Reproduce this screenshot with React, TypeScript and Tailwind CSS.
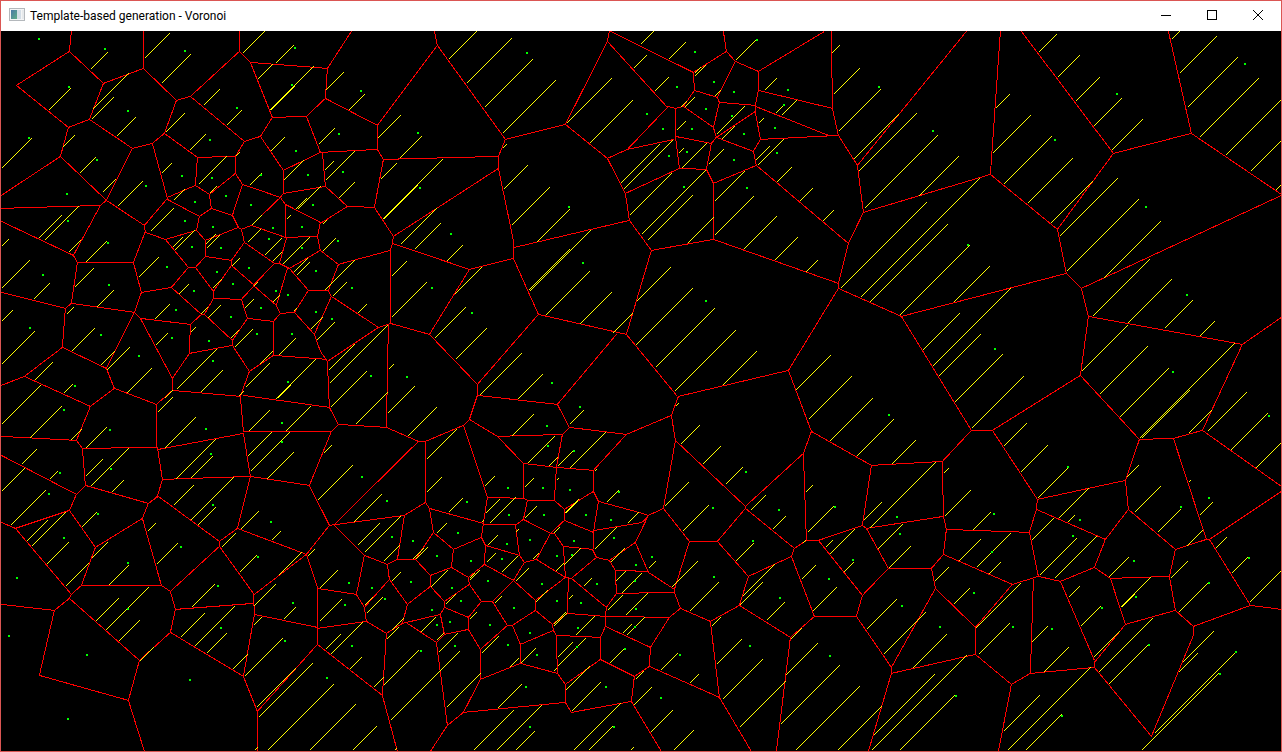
import React from "react";

// Polylines of cell boundaries, "x,y x,y ..." separated by semicolons.
const EDGES = `
71,31 69,51 103,83 89,119 68,127 16,85 69,51;68,127 60,156 1,195;143,31 143,68 103,83;
143,68 176,100 190,96 239,51 239,31;239,51 250,62 327,68;250,62 272,117 306,116 325,98;
176,100 164,133 152,143 132,148 89,119;132,148 106,200 60,156;1,208 100,205 106,200 144,225;
100,205 73,255;1,221 73,255;152,143 167,198 144,225 145,232;164,133 197,157 235,156 244,141 260,136 272,117;
190,96 244,141;197,157 195,185 167,197;195,185 209,194 235,173 235,156;
235,173 242,184 280,197 283,193 283,170 260,136;242,184 232,215 211,208 209,194;167,199 199,216 211,208;
199,216 196,230 165,239 145,232;232,215 238,227 241,229 251,225 280,197;196,230 205,240 238,227;
283,193 325,186;283,170 320,152 306,116;280,197 285,204 285,237 251,225;285,237 317,236;285,204 320,222 317,236;
351,31 327,68 325,98 377,125 437,45 434,31;437,45 505,139 565,124 607,41 609,31;
377,125 377,149 383,159 498,156 505,139;498,156 498,168 393,236 374,207 383,159;498,168 513,240;
320,152 377,149;322,152 325,186 347,206 374,207;347,206 320,223;393,236 392,243;
565,124 607,158 625,193 629,220 651,250;629,220 514,247;607,158 627,149 667,107;627,149 674,139;
607,41 667,107;610,31 693,72 694,90 683,106 675,108 667,106;
723,31 726,51 693,72;726,51 735,61 758,71 824,31;735,61 717,97 694,90;
717,97 719,102 755,105 758,90 758,71;758,90 832,108 831,31;832,108 838,135 857,165 966,31;
857,165 863,212 990,174 1000,31;863,212 848,243;755,106 828,135 838,135 760,139 755,112 755,105;
755,111 716,137 753,151 760,139;719,102 713,127 716,137 711,143 706,169 713,183 756,165 753,151;
683,106 713,127;675,108 675,136 711,143;675,136 679,168 706,169;679,168 625,193;713,183 713,239;
756,165 848,243;1021,31 1113,153 1191,133 1168,31;1191,133 1281,194;1281,195 1081,288;
990,174 1057,229 1113,153;1057,229 1066,273;
73,255 77,262 133,262 145,231;77,262 71,303 65,308 1,292;65,308 62,347 24,376 1,385;
62,347 106,368 134,312 71,303;133,262 141,292 134,312;141,292 171,287 188,267 165,239;
134,312 140,318 190,324 201,314 171,287;140,318 172,378 189,353 190,324;
172,378 172,390 156,404 114,388 106,368;114,388 90,406 24,376;90,406 76,440 1,436;
76,440 82,448 156,447 156,404;172,390 240,396 249,371 232,345 189,353;
188,267 195,267 205,256 205,240;205,256 231,260 244,242 241,229;
195,267 213,291 213,298 241,299 254,285 231,265 213,291;231,260 231,265;213,298 204,314 201,314;
204,314 232,340 247,318 241,299;232,340 232,345;247,318 273,321 280,313 276,305 253,285 274,263 244,242;
273,321 273,355 249,371;273,355 327,359;280,313 294,312 308,290 289,268 287,268 276,305;
274,263 279,263 289,268;279,263 286,238;289,268 320,250 317,236;308,290 328,290;294,312 314,334;
320,351 327,361;314,334 320,351;240,396 243,431 331,431;243,395 329,407;
243,433 158,449;157,447 162,479 250,476 243,433;250,476 309,485 331,431;162,479 157,496 148,503;
250,476 237,528;309,485 329,525;82,448 85,485 76,494 1,455;85,485 148,503;76,494 69,510;
392,243 390,250 338,264 320,250;338,264 328,290 331,296 314,334;331,296 378,327 390,323 390,250;
378,327 327,361 329,407 338,424 386,427 388,324;390,323 429,334 469,269 392,243;
469,269 513,258 513,240;513,258 538,314 626,334 651,250;538,314 477,384 429,334;
477,384 477,395 469,419 463,425 425,441 418,441 386,427;477,395 557,404 616,334;
557,404 569,427 626,434 671,415;469,419 497,436 562,434 569,427;497,436 523,463 556,467 562,434;
556,467 593,470 626,434;556,467 554,500;523,463 523,498;593,470 593,491 564,509;593,491 598,501;
425,441 425,502;418,441 334,524;463,425 487,497;338,424 331,431;626,334 677,396;
651,250 713,239 838,283 838,288 788,370 678,396 671,415 675,440 663,508;848,243 838,283;675,440 745,506;
838,288 901,316 1066,273;901,316 971,430;788,370 811,431 803,453 745,506;
811,431 871,465 942,461 971,430;803,453 806,540;871,465 862,525;942,461 943,516;
1066,273 1081,288 1088,316 1242,344 1281,317;1088,316 1080,375 992,430 971,430;
1080,375 1139,439 1173,438 1202,430 1242,344;1202,430 1281,486;1139,439 1125,480 1128,509;
992,430 1037,499;1125,480 1037,499;1173,438 1206,539;
1,522 15,528 69,510 95,547 142,518 148,503 158,496;15,528 71,594 69,598 54,610 1,604;
142,518 161,585 170,591 219,546 219,541 158,496;95,547 81,585 71,594;81,585 161,585;
69,598 139,660 128,700 39,675 54,610;128,700 144,751;170,591 175,609 170,632 139,660;
170,632 243,676 254,614 253,593 219,546;175,609 253,603;254,614 317,627;
219,541 237,528 306,554 254,594;306,554 329,525;306,554 317,587 317,644 257,711 257,751;243,676 257,711;
329,525 404,515 425,502;334,525 364,555 356,594 317,588;364,555 387,564 397,559 404,515;
397,559 415,559 433,532 429,508;425,502 429,508 483,523 487,497;433,532 453,549 481,537 483,523;
453,549 451,567 430,575 415,559;387,564 389,579 364,607 356,594;
389,579 407,604 402,623 386,633 366,621 364,607;366,621 317,628;407,604 430,586 430,575;
430,586 444,601 469,584 468,577 451,567;468,577 484,564 485,545 481,537;
485,545 519,555 515,524 483,524;515,525 523,519 527,500 554,500 564,509 564,520 550,533 523,519;
487,497 524,498 527,500;564,520 593,532 598,501 642,513;594,530 642,522;593,531 593,549;
550,533 536,559 524,562 519,555;550,533 554,533 563,546 592,549;563,546 565,577 536,559;
524,562 513,580 484,564;469,584 481,601 492,601 513,580;492,601 507,625 512,625 535,610 535,600 513,580;
535,600 565,577 571,578 596,557 592,549;596,557 609,560 635,542 648,515;
609,560 615,570 616,593 606,607 571,578;568,578 567,613 552,624 535,610;567,613 605,616 606,607;
615,570 648,571;616,593 674,592;604,616 669,617;605,616 605,626 650,647;
552,624 553,630 520,644 512,625;553,630 556,635 600,637 605,626;556,635 557,673 520,663 520,644;
520,663 480,679 480,649 507,625;481,601 468,617 444,607 444,601;468,617 468,629 480,649;
468,629 444,634 440,614 444,607;440,614 402,623;407,623 436,642 444,634;386,633 382,695 317,644;
382,695 397,751;436,642 447,725 463,712 480,679;447,725 430,751;463,712 565,702 565,684 557,673;
565,684 600,659 600,637;600,659 634,676 649,666;634,676 631,701 571,712 565,702;631,701 661,751;
642,513 648,515 663,508 689,541 717,541 745,508 745,506;689,541 674,589;635,542 648,572 674,589;642,522 648,515;
674,589 674,592 680,608 710,621 739,605 748,576 717,541;680,608 669,617 650,647 649,666 719,697 710,621;
719,697 751,751;739,605 790,637 776,751;790,637 814,616 791,556 748,576;791,556 794,548 745,508;
794,548 806,540 818,540 862,525;818,540 862,595 856,616 814,616;
862,525 866,528 943,516 946,529 943,554 931,568 888,568 866,528;888,568 862,595;
856,616 891,667 935,588 931,568;891,667 891,673 868,751;891,673 975,654 975,627 935,588;
946,529 1029,532;943,554 1012,584;
1037,499 1036,509 1029,532 1038,576 1012,584 975,627;1036,509 1105,539 1128,509;
1105,539 1094,567 1060,581 1038,576;1094,567 1110,578 1169,576 1175,549 1128,509;
1175,549 1206,539 1209,539 1281,491;1209,539 1250,605 1281,609;1169,576 1175,610 1193,626 1250,605;
1110,578 1125,624 1175,610;1125,624 1094,662 1094,667 1151,736 1193,635 1193,626;1060,581 1094,660;
1094,667 1030,673 1033,579;1030,673 1011,684 975,654;1011,684 998,751
`;

// 45 degree hatch strokes: lower-left x, y and horizontal run.
const HATCHES = `
90,69,17 48,110,22 92,109,36 91,119,22 116,136,19 144,58,25 161,83,29 1,168,30 62,147,12 79,173,16
102,192,13 117,206,25 165,132,19 189,150,16 203,105,16 226,125,15 242,53,22 275,63,18 257,79,15
269,110,44 270,110,24 270,151,14 283,180,20 318,144,16 161,173,10 198,184,28 235,156,4 249,185,12
209,193,7 173,200,11 150,231,23 172,247,10 174,250,20 205,244,10 206,248,13 251,225,10 247,242,13
264,255,17 38,238,23 44,240,34 1,246,7 295,209,11 297,209,23 286,219,4 282,264,27 272,261,9
325,90,18 348,110,16 377,138,23 399,158,22 448,59,28 466,83,45 484,107,48 502,133,53 502,148,4
566,123,45 589,143,43 324,170,9 325,180,29 338,198,16 380,179,16 382,219,60 383,219,34 400,244,36
414,249,26 446,261,16 503,189,24 511,225,38 536,242,33 529,291,61 528,290,41 620,183,39 623,189,49
629,215,42 641,234,64 647,240,45 633,68,13 640,44,13 322,224,4 322,251,13
668,59,17 654,91,14 694,76,11 694,73,6 735,60,21 714,96,6 764,90,12 831,53,8 833,94,26 838,131,42
853,159,45 858,171,58 864,208,73 918,196,40 840,288,86 860,297,119 869,302,78 775,113,8 781,115,15
680,107,6 684,107,10 676,130,9 716,134,28 721,139,13 758,123,5 755,160,14 757,165,26 776,182,15
799,201,13 822,221,11 678,153,5 681,168,25 708,164,15 714,201,30 714,235,39 687,243,26 743,249,33
774,260,23 805,272,12
995,108,14 992,153,38 1003,184,48 1027,203,45 1050,223,42 1038,52,18 1057,77,22 1075,101,24
1093,126,28 1111,150,31 1171,39,8 1179,73,37 1187,107,50 1199,137,59 1225,155,56 1250,171,31
1275,190,6 1059,236,58 1066,271,72 1103,278,57
1092,316,57 1127,323,44 1164,328,28 1199,336,15 1081,371,46 1099,394,48 1119,417,49 1139,438,95
1141,438,48 1188,433,23 1207,431,39 1230,450,37 1255,468,26 954,402,48 938,376,42 932,366,78
922,350,37 953,302,36 899,315,70 971,428,52 1003,446,23 1020,472,27 1037,498,30 1058,518,30
1126,477,12 1134,512,26 1188,482,2 944,516,26
1,288,28 33,299,16 1,321,11 1,364,33 68,252,12 85,262,21 74,287,19 96,307,17 138,277,20 66,314,7
71,351,23 100,365,14 106,370,23 126,393,25 34,380,18 63,393,9 1,424,39 29,438,32 70,440,11 85,448,21
154,319,15 155,345,12 178,294,10 200,314,7 207,318,13 212,288,9 231,266,8 253,286,4 244,308,9
190,332,5 230,338,8 234,347,18 272,302,7 278,355,17 259,364,13 245,387,24 238,396,5 176,389,40
200,392,22 164,398,8 157,412,15 164,448,31 275,399,40 277,398,13 248,431,21 285,431,25 247,456,24
250,471,39 266,479,27 85,476,17 90,486,38 111,492,12 175,479,40 190,478,22 173,505,20 190,520,43
21,464,15 49,479,8 1,491,23 10,525,35 293,272,14 296,275,13 293,311,3 310,329,12 316,340,18
324,290,30 332,296,14 357,313,9 391,276,15 391,317,35 454,294,27 434,338,31 455,359,31 545,315,44
579,324,32 612,333,20 636,301,34 635,345,57 328,370,26 329,383,58 330,407,36 355,424,32 388,369,5
387,413,27 407,436,29 479,395,42 517,399,25 511,436,22 569,424,14 426,459,30 426,492,15 323,453,8
317,500,35 353,522,28 484,486,10 527,463,27 548,466,9 557,466,16 569,468,36 524,487,9 556,480,2
594,471,2 606,502,12
655,367,59 674,391,61 722,385,34 675,406,3 680,444,19 702,464,18 725,484,17 664,506,24 795,390,35
808,419,43 829,441,43 856,456,37 891,464,24 869,528,66 943,473,5 805,492,7 750,510,15
26,541,21 31,546,34 46,564,22 65,586,23 81,527,15 91,558,16 108,585,20 147,531,8 156,564,21
197,525,18 240,529,18 271,540,9 221,547,14 239,572,17 278,575,23 307,556,7 191,607,23 253,606,22
283,619,12 253,625,8 95,621,23 105,630,43 118,641,21 180,637,24 194,646,40 206,653,20 232,669,15
244,676,38 139,661,14 256,707,39 258,717,54 267,750,66 309,750,46 254,750,3 319,588,18 319,621,22
352,750,24 357,545,22 364,552,36 383,561,16 448,512,14 436,533,10 412,559,11 415,559,12 391,581,9
364,605,8 366,613,16 391,630,12 386,639,12 430,587,17 445,604,10 469,580,10 469,578,5 485,513,14
489,523,26 481,522,2 524,518,12 564,513,14 565,513,12 553,533,6 515,532,3 487,545,10 486,562,9
501,572,16 532,559,6 515,581,13 494,603,7 555,571,8 563,565,17 594,549,22 610,562,14 583,586,8
568,599,4 535,602,12 553,624,12 553,626,13 615,581,10 621,593,20 607,610,15 625,615,22 627,523,11
575,635,19 622,633,9 626,635,18 609,663,14 635,679,8 325,649,15 330,654,32 349,669,12 373,687,10
420,632,15 436,640,7 438,652,19 469,619,7 383,685,35 390,720,69 446,707,34 394,750,2 481,653,17
509,667,9 520,663,15 553,671,3 557,657,15 557,666,28 565,690,24 571,711,29 497,708,24 473,750,40
496,750,45 515,750,19 573,750,47 588,750,24 633,705,18 630,750,3
682,531,26 648,568,7 671,587,26 689,611,29 735,561,18 772,529,13 807,532,26 802,543,3 825,547,7
829,554,25 843,572,10 863,520,18 877,549,25 888,568,22 801,579,14 812,611,24 742,596,32 739,605,23
766,620,18 790,639,11 711,626,9 716,664,25 722,699,40 739,727,46 785,675,32 780,724,59 795,750,64
837,750,44 873,735,61 871,750,95 899,750,55 660,670,17 689,683,9 650,732,22 673,750,20 866,629,30
883,654,42 912,668,34 934,581,14 953,604,16 958,561,22
972,530,18 976,567,34 988,574,12 975,628,45 978,654,31 1031,540,22 1067,522,7 1039,575,37
1054,578,42 1108,577,20 1157,532,23 1199,515,13 1186,546,16 1215,548,11 1231,573,16 1249,602,32
1170,578,17 1178,612,30 1120,607,30 1121,607,13 1068,597,11 1080,626,20 1031,642,16 1043,672,25
1093,657,26 1098,672,54 1108,684,39 1003,731,36 1007,750,83 1025,750,36 1182,662,31 1178,672,19
1154,733,81 1141,750,77
`;

// Cell sites.
const SITES = `
39,39 105,49 185,51 69,87 128,111 29,138 97,160 67,194 68,221 146,186 237,108 210,140 295,48 292,85
296,151 308,175 182,176 212,178 226,196 195,202 185,221 213,227 251,205 261,175 273,228 269,239
302,227 313,205 361,91 527,53 339,134 418,133 343,172 420,188 451,234 569,207 695,52 757,40 677,87
714,82 734,92 706,109 647,114 663,129 692,129 687,152 669,156 732,116 744,134 775,128 734,160
777,153 784,105 788,90 684,187 747,188 879,87 933,131 1055,140 1117,94 1245,64 1146,207
43,275 108,243 109,285 167,267 192,247 221,248 217,272 194,291 249,268 233,284 261,308 276,291
288,295 302,248 316,271 316,312 176,310 231,317 257,334 292,334 172,338 209,341 139,356 101,335
30,328 213,361 288,382 75,386 64,410 110,430 206,429 282,423 282,442 211,454 111,469 60,473 49,494
338,241 352,288 332,319 432,288 472,313 583,263 371,376 407,377 552,383 580,407 547,426 548,446
574,451 508,488 543,488 570,490 362,477 619,492 706,301 746,472 889,415 968,245 1187,295 995,349
1173,372 1269,416 1068,467 98,514 17,578 64,538 128,563 181,547 213,505 271,522 258,557 218,586
293,603 285,641 128,609 221,628 9,636 87,655 190,680 68,719 387,501 467,502 509,515 544,515 586,515
611,520 392,537 413,541 458,533 437,556 471,561 507,544 502,559 530,540 574,541 557,556 572,555
614,538 349,583 372,588 345,605 385,599 411,582 452,588 488,581 432,610 461,601 437,625 450,622
490,625 455,646 514,608 542,584 597,584 557,601 581,603 530,633 508,645 578,628 577,647 537,655
352,646 327,678 421,651 526,687 606,687 625,649 635,627 636,609 635,581 636,565 530,727 614,727
713,508 779,510 835,507 652,557 753,541 714,577 780,598 829,579 853,560 897,517 900,534 902,606
750,646 680,655 661,698 830,656 940,627 956,696 994,514 1080,520 1073,536 992,552 974,593 1134,561
1181,507 1209,498 1249,558 1209,583 1136,597 1102,608 1052,629 1013,627 1149,645 1236,652 1220,674
1062,716
`;

const triples = (s: string): number[][] =>
  s.trim().split(/\s+/).map((t) => t.split(",").map(Number));

const edgePath = EDGES.split(";")
  .map((line) => "M" + line.trim().split(/\s+/).join("L"))
  .join("");
const hatchPath = triples(HATCHES)
  .map(([x, y, n]) => `M${x} ${y}L${x + n} ${y - n}`)
  .join("");
const sitePath = triples(SITES)
  .map(([x, y]) => `M${x - 1} ${y - 1}h2v2h-2z`)
  .join("");

function AppIcon() {
  return (
    <svg width="16" height="16" viewBox="0 0 16 16" aria-hidden="true">
      <defs>
        <linearGradient id="pane" x1="0" y1="0" x2="1" y2="1">
          <stop offset="0" stopColor="#4a78a8" />
          <stop offset="1" stopColor="#5fae86" />
        </linearGradient>
      </defs>
      <rect x="0.5" y="0.5" width="15" height="12" fill="#f4f5f6" stroke="#b4b8bc" />
      <rect x="2" y="2" width="6" height="9" fill="url(#pane)" />
      <rect x="8" y="2" width="4" height="9" fill="#d3dde6" />
      <rect x="13" y="2" width="2" height="9" fill="#e6e9eb" />
    </svg>
  );
}

function CaptionButton({ label, children }: { label: string; children: React.ReactNode }) {
  return (
    <button type="button" aria-label={label} className="flex h-full w-[46px] items-center justify-center">
      <svg width="12" height="12" viewBox="0 1 12 12" fill="none" stroke="#000" aria-hidden="true">
        {children}
      </svg>
    </button>
  );
}

function Diagram() {
  return (
    <svg viewBox="1 31 1280 720" className="block h-auto w-full bg-black" shapeRendering="crispEdges" role="img" aria-label="Voronoi">
      <g transform="translate(0.4 0.4)" fill="none" strokeWidth="1">
        <path d={edgePath} stroke="#ff0000" />
        <path d={hatchPath} stroke="#ffff00" />
      </g>
      <path d={sitePath} fill="#00ff00" />
    </svg>
  );
}

export default function App() {
  return (
    <div className="w-full border border-[#db5653] bg-white">
      <header className="flex h-[30px] items-center bg-white pl-2">
        <AppIcon />
        <h1 className="flex-1 pl-[5px] font-['Roboto','Noto_Sans',sans-serif] text-[12px] leading-4 font-normal text-black">
          Template-based generation - Voronoi
        </h1>
        <div className="flex h-full">
          <CaptionButton label="Minimize">
            <path d="M1 6.5h10" />
          </CaptionButton>
          <CaptionButton label="Maximize">
            <rect x="1.5" y="1.5" width="9" height="9" />
          </CaptionButton>
          <CaptionButton label="Close">
            <path d="M1 1l10 10M11 1L1 11" />
          </CaptionButton>
        </div>
      </header>
      <main>
        <Diagram />
      </main>
    </div>
  );
}
